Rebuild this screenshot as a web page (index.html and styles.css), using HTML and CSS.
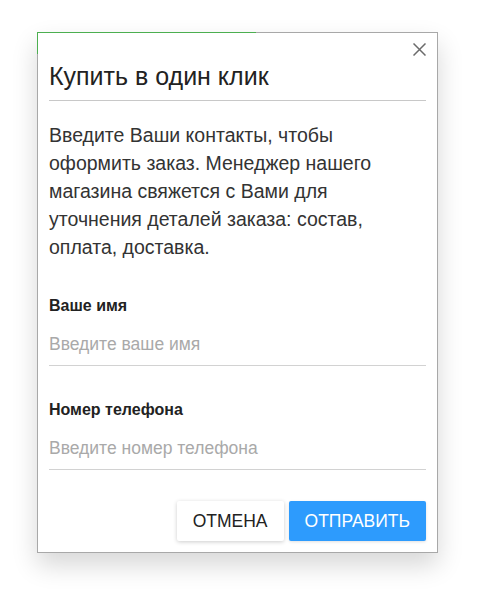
FILE: index.html
```html
<!DOCTYPE html>
<html lang="ru">
<head>
    <meta charset="UTF-8">
    <meta name="viewport" content="width=device-width, initial-scale=1.0">
    <title>Купить в один клик</title>
    <link rel="stylesheet" href="styles.css">
</head>
<body>
    <div class="modal">
        <!-- полоска загрузки поверх рамки -->
        <span class="loader-top"></span>
        <span class="loader-left"></span>

        <button class="modal-close" type="button" aria-label="Закрыть">
            <svg width="13" height="13" viewBox="0 0 13 13">
                <path d="M0.5 0.5 L12.5 12.5 M12.5 0.5 L0.5 12.5" stroke="#6b6b6b" stroke-width="1.5" fill="none"/>
            </svg>
        </button>

        <h2 class="modal-title">Купить в один клик</h2>

        <p class="modal-text">Введите Ваши контакты, чтобы оформить заказ. Менеджер нашего магазина свяжется с Вами для уточнения деталей заказа: состав, оплата, доставка.</p>

        <form class="order-form">
            <div class="field">
                <label for="name">Ваше имя</label>
                <input type="text" id="name" placeholder="Введите ваше имя">
            </div>
            <div class="field">
                <label for="phone">Номер телефона</label>
                <input type="tel" id="phone" placeholder="Введите номер телефона">
            </div>
            <div class="actions">
                <button type="button" class="btn btn-cancel">ОТМЕНА</button>
                <button type="submit" class="btn btn-submit">ОТПРАВИТЬ</button>
            </div>
        </form>
    </div>
</body>
</html>
```

FILE: styles.css
```css
html {
    min-height: 100%;
    background: #fff;
}

body {
    margin: 0;
    min-height: 600px;
    background: #fff;
    font-family: 'Liberation Sans', Arial, sans-serif;
    color: #333;
}

.modal {
    position: relative;
    width: 377px;
    margin: 32px 0 0 37px;
    padding: 0 11px 11px;
    background: #fff;
    border: 1px solid #a8a8a8;
    box-shadow: 0 12px 24px rgba(0, 0, 0, 0.16);
}

.loader-top,
.loader-left {
    position: absolute;
    background: #4caf50;
}

.loader-top {
    top: -1px;
    left: -1px;
    width: 219px;
    height: 1px;
}

.loader-left {
    top: -1px;
    left: -1px;
    width: 1px;
    height: 22px;
}

.modal-close {
    position: absolute;
    top: 10px;
    right: 11px;
    width: 13px;
    height: 13px;
    padding: 0;
    border: none;
    background: none;
    cursor: pointer;
}

.modal-close svg {
    display: block;
}

.modal-title {
    margin: 29px 0 0;
    padding-bottom: 10px;
    font-size: 25px;
    line-height: 28px;
    font-weight: normal;
    color: #222;
    border-bottom: 1px solid #c8c8c8;
}

.modal-text {
    margin: 20px 0 0;
    padding-right: 20px;
    font-size: 19.5px;
    line-height: 28px;
    color: #333;
}

.order-form {
    margin-top: 35px;
}

.field label {
    display: block;
    font-size: 16px;
    line-height: 20px;
    font-weight: bold;
    color: #222;
}

.field input {
    display: block;
    box-sizing: border-box;
    width: 100%;
    height: 40px;
    margin-top: 10px;
    padding: 0 0 2px;
    border: none;
    border-bottom: 1px solid #d2d2d2;
    font-family: inherit;
    font-size: 17.5px;
    color: #333;
    outline: none;
}

.field input::placeholder {
    color: #a9a9a9;
}

.field + .field {
    margin-top: 34px;
}

.actions {
    display: flex;
    justify-content: flex-end;
    gap: 5px;
    margin-top: 31px;
}

.btn {
    height: 40px;
    padding: 0 16px;
    border: none;
    border-radius: 2px;
    font-family: inherit;
    font-size: 17.5px;
    cursor: pointer;
}

.btn-cancel {
    background: #fff;
    color: #222;
    box-shadow: 0 1px 4px rgba(0, 0, 0, 0.2);
}

.btn-submit {
    background: #2d9bfd;
    color: #fff;
    box-shadow: 0 1px 3px rgba(0, 0, 0, 0.12);
}
```
